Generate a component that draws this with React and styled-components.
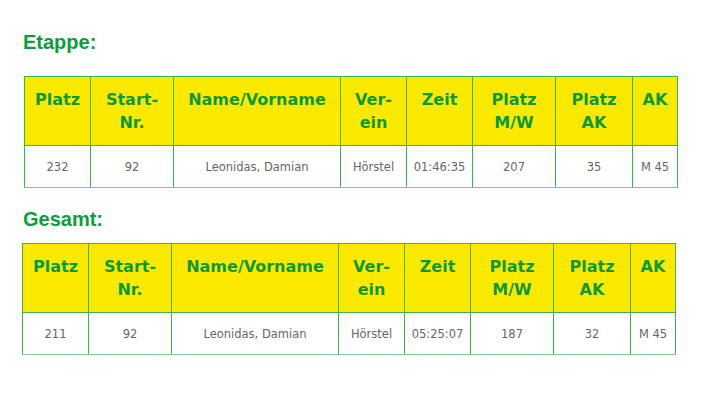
import styled, { createGlobalStyle } from "styled-components";

const GlobalStyle = createGlobalStyle`
  html, body {
    margin: 0;
    background: #ffffff;
  }
`;

const columns = [
  { key: "platz", label: ["Platz"], width: 66 },
  { key: "start", label: ["Start-", "Nr."], width: 83 },
  { key: "name", label: ["Name/Vorname"], width: 167 },
  { key: "verein", label: ["Ver-", "ein"], width: 66 },
  { key: "zeit", label: ["Zeit"], width: 66 },
  { key: "mw", label: ["Platz", "M/W"], width: 83 },
  { key: "platzak", label: ["Platz", "AK"], width: 77 },
  { key: "ak", label: ["AK"], width: 45 },
];

const results = [
  {
    title: "Etappe:",
    offset: 24,
    titleGap: 23,
    row: ["232", "92", "Leonidas, Damian", "Hörstel", "01:46:35", "207", "35", "M 45"],
  },
  {
    title: "Gesamt:",
    offset: 22,
    titleGap: 13,
    row: ["211", "92", "Leonidas, Damian", "Hörstel", "05:25:07", "187", "32", "M 45"],
  },
];

const Page = styled.div`
  padding: 31px 0 0 23px;
  display: flex;
  flex-direction: column;
`;

const Section = styled.section`
  display: flex;
  flex-direction: column;
  margin-bottom: 20px;
`;

const Title = styled.h2`
  margin: 0;
  font-family: "Liberation Sans", Arial, sans-serif;
  font-weight: bold;
  font-size: 20px;
  line-height: 22px;
  color: #0a9e3c;
`;

const Table = styled.table`
  margin-top: ${(p) => p.$gap}px;
  margin-left: ${(p) => p.$offset - 23}px;
  border-collapse: collapse;
  table-layout: fixed;
  width: 654px;
  border: 1px solid #3cb44b;
  border-bottom-color: #7fcc88;
`;

const HeadCell = styled.th`
  background: #fce900;
  border: 1px solid #3cb44b;
  height: 46px;
  padding: 11px 2px 11px;
  vertical-align: top;
  text-align: center;
  font-family: "DejaVu Sans", Verdana, sans-serif;
  font-weight: bold;
  font-size: 16px;
  line-height: 23px;
  color: #0a9a3c;
`;

const Cell = styled.td`
  border: 1px solid #3cb44b;
  border-bottom-color: #7fcc88;
  height: 41px;
  padding: 0 2px;
  text-align: center;
  vertical-align: middle;
  font-family: "DejaVu Sans", Verdana, sans-serif;
  font-size: 11.5px;
  color: #666666;
  white-space: nowrap;
`;

const ResultTable = ({ offset, gap, row }) => (
  <Table $offset={offset} $gap={gap}>
    <colgroup>
      {columns.map((c) => (
        <col key={c.key} style={{ width: c.width }} />
      ))}
    </colgroup>
    <thead>
      <tr>
        {columns.map((c) => (
          <HeadCell key={c.key}>
            {c.label.map((line, i) => (
              <span key={i}>
                {i > 0 && <br />}
                {line}
              </span>
            ))}
          </HeadCell>
        ))}
      </tr>
    </thead>
    <tbody>
      <tr>
        {row.map((value, i) => (
          <Cell key={columns[i].key}>{value}</Cell>
        ))}
      </tr>
    </tbody>
  </Table>
);

const App = () => {
  return (
    <>
      <GlobalStyle />
      <Page>
        {results.map((r) => (
          <Section key={r.title}>
            <Title>{r.title}</Title>
            <ResultTable offset={r.offset} gap={r.titleGap} row={r.row} />
          </Section>
        ))}
      </Page>
    </>
  );
};

export default App;
